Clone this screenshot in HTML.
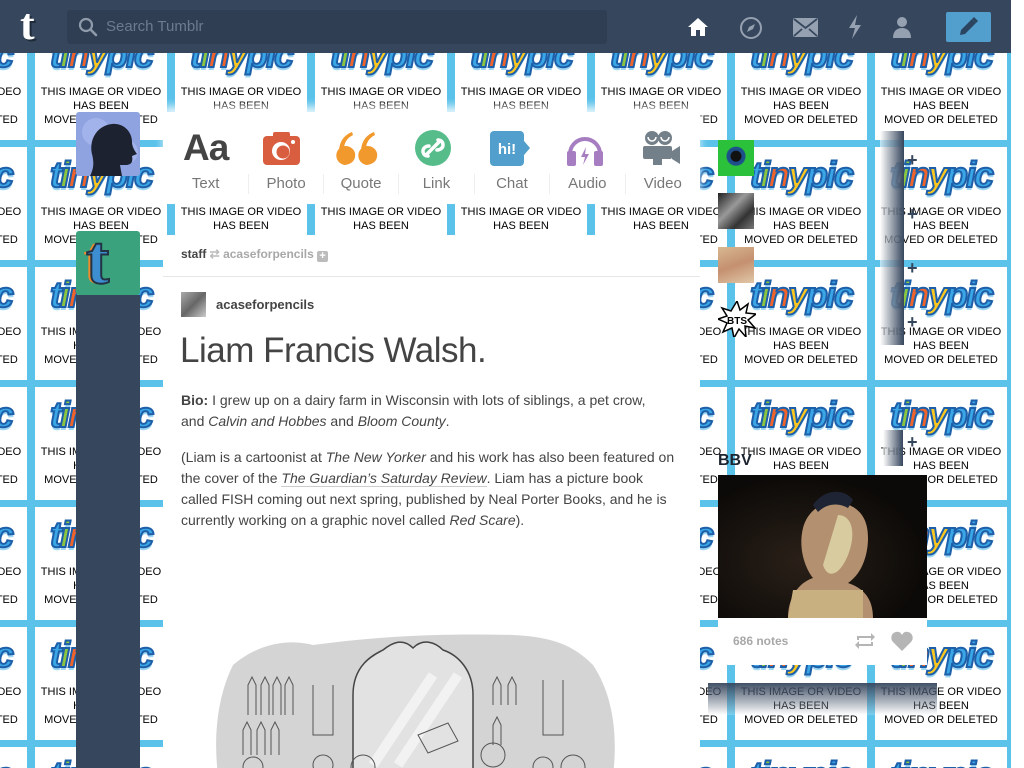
<!DOCTYPE html>
<html><head><meta charset="utf-8"><style>
*{margin:0;padding:0;box-sizing:border-box}
html,body{width:1024px;height:768px;overflow:hidden;background:#fff;font-family:"Liberation Sans",sans-serif;position:relative}
#bg{position:absolute;left:0;top:0;width:1011px;height:768px;overflow:hidden}
#grid{position:absolute;left:-113px;top:-100px;width:1260px;display:flex;flex-wrap:wrap}
.c{position:relative;width:140px;height:120px;border-left:8px solid #5bc2ea;border-top:7px solid #5bc2ea;background:#fff}
.c b{position:absolute;left:0;right:0;top:8px;text-align:center;font:italic 900 36px/40px "Liberation Sans",sans-serif;letter-spacing:-2px;-webkit-text-stroke:2px #1d5fa8;text-shadow:0 3px 0 #9fd6f2}
.c b span:nth-child(1){color:#3aa6e6}.c b span:nth-child(2){color:#8cc63e}.c b span:nth-child(3){color:#f0632a}.c b span:nth-child(4){color:#fcc721}.c b span:nth-child(n+5){color:#3aa6e6}
.c u{position:absolute;left:0;right:0;top:58px;text-align:center;text-decoration:none;font:11px/14px "Liberation Sans",sans-serif;color:#000}
#hdr{position:absolute;left:0;top:0;width:1011px;height:53px;background:#36465d}
.abs{position:absolute}
</style></head><body>
<div id="bg"><div id="grid">
<div class="c"><b><span>t</span><span>i</span><span>n</span><span>y</span><span>p</span><span>i</span><span>c</span></b><u>THIS IMAGE OR VIDEO<br>HAS BEEN<br>MOVED OR DELETED</u></div><div class="c"><b><span>t</span><span>i</span><span>n</span><span>y</span><span>p</span><span>i</span><span>c</span></b><u>THIS IMAGE OR VIDEO<br>HAS BEEN<br>MOVED OR DELETED</u></div><div class="c"><b><span>t</span><span>i</span><span>n</span><span>y</span><span>p</span><span>i</span><span>c</span></b><u>THIS IMAGE OR VIDEO<br>HAS BEEN<br>MOVED OR DELETED</u></div><div class="c"><b><span>t</span><span>i</span><span>n</span><span>y</span><span>p</span><span>i</span><span>c</span></b><u>THIS IMAGE OR VIDEO<br>HAS BEEN<br>MOVED OR DELETED</u></div><div class="c"><b><span>t</span><span>i</span><span>n</span><span>y</span><span>p</span><span>i</span><span>c</span></b><u>THIS IMAGE OR VIDEO<br>HAS BEEN<br>MOVED OR DELETED</u></div><div class="c"><b><span>t</span><span>i</span><span>n</span><span>y</span><span>p</span><span>i</span><span>c</span></b><u>THIS IMAGE OR VIDEO<br>HAS BEEN<br>MOVED OR DELETED</u></div><div class="c"><b><span>t</span><span>i</span><span>n</span><span>y</span><span>p</span><span>i</span><span>c</span></b><u>THIS IMAGE OR VIDEO<br>HAS BEEN<br>MOVED OR DELETED</u></div><div class="c"><b><span>t</span><span>i</span><span>n</span><span>y</span><span>p</span><span>i</span><span>c</span></b><u>THIS IMAGE OR VIDEO<br>HAS BEEN<br>MOVED OR DELETED</u></div><div class="c"><b><span>t</span><span>i</span><span>n</span><span>y</span><span>p</span><span>i</span><span>c</span></b><u>THIS IMAGE OR VIDEO<br>HAS BEEN<br>MOVED OR DELETED</u></div>
<div class="c"><b><span>t</span><span>i</span><span>n</span><span>y</span><span>p</span><span>i</span><span>c</span></b><u>THIS IMAGE OR VIDEO<br>HAS BEEN<br>MOVED OR DELETED</u></div><div class="c"><b><span>t</span><span>i</span><span>n</span><span>y</span><span>p</span><span>i</span><span>c</span></b><u>THIS IMAGE OR VIDEO<br>HAS BEEN<br>MOVED OR DELETED</u></div><div class="c"><b><span>t</span><span>i</span><span>n</span><span>y</span><span>p</span><span>i</span><span>c</span></b><u>THIS IMAGE OR VIDEO<br>HAS BEEN<br>MOVED OR DELETED</u></div><div class="c"><b><span>t</span><span>i</span><span>n</span><span>y</span><span>p</span><span>i</span><span>c</span></b><u>THIS IMAGE OR VIDEO<br>HAS BEEN<br>MOVED OR DELETED</u></div><div class="c"><b><span>t</span><span>i</span><span>n</span><span>y</span><span>p</span><span>i</span><span>c</span></b><u>THIS IMAGE OR VIDEO<br>HAS BEEN<br>MOVED OR DELETED</u></div><div class="c"><b><span>t</span><span>i</span><span>n</span><span>y</span><span>p</span><span>i</span><span>c</span></b><u>THIS IMAGE OR VIDEO<br>HAS BEEN<br>MOVED OR DELETED</u></div><div class="c"><b><span>t</span><span>i</span><span>n</span><span>y</span><span>p</span><span>i</span><span>c</span></b><u>THIS IMAGE OR VIDEO<br>HAS BEEN<br>MOVED OR DELETED</u></div><div class="c"><b><span>t</span><span>i</span><span>n</span><span>y</span><span>p</span><span>i</span><span>c</span></b><u>THIS IMAGE OR VIDEO<br>HAS BEEN<br>MOVED OR DELETED</u></div><div class="c"><b><span>t</span><span>i</span><span>n</span><span>y</span><span>p</span><span>i</span><span>c</span></b><u>THIS IMAGE OR VIDEO<br>HAS BEEN<br>MOVED OR DELETED</u></div>
<div class="c"><b><span>t</span><span>i</span><span>n</span><span>y</span><span>p</span><span>i</span><span>c</span></b><u>THIS IMAGE OR VIDEO<br>HAS BEEN<br>MOVED OR DELETED</u></div><div class="c"><b><span>t</span><span>i</span><span>n</span><span>y</span><span>p</span><span>i</span><span>c</span></b><u>THIS IMAGE OR VIDEO<br>HAS BEEN<br>MOVED OR DELETED</u></div><div class="c"><b><span>t</span><span>i</span><span>n</span><span>y</span><span>p</span><span>i</span><span>c</span></b><u>THIS IMAGE OR VIDEO<br>HAS BEEN<br>MOVED OR DELETED</u></div><div class="c"><b><span>t</span><span>i</span><span>n</span><span>y</span><span>p</span><span>i</span><span>c</span></b><u>THIS IMAGE OR VIDEO<br>HAS BEEN<br>MOVED OR DELETED</u></div><div class="c"><b><span>t</span><span>i</span><span>n</span><span>y</span><span>p</span><span>i</span><span>c</span></b><u>THIS IMAGE OR VIDEO<br>HAS BEEN<br>MOVED OR DELETED</u></div><div class="c"><b><span>t</span><span>i</span><span>n</span><span>y</span><span>p</span><span>i</span><span>c</span></b><u>THIS IMAGE OR VIDEO<br>HAS BEEN<br>MOVED OR DELETED</u></div><div class="c"><b><span>t</span><span>i</span><span>n</span><span>y</span><span>p</span><span>i</span><span>c</span></b><u>THIS IMAGE OR VIDEO<br>HAS BEEN<br>MOVED OR DELETED</u></div><div class="c"><b><span>t</span><span>i</span><span>n</span><span>y</span><span>p</span><span>i</span><span>c</span></b><u>THIS IMAGE OR VIDEO<br>HAS BEEN<br>MOVED OR DELETED</u></div><div class="c"><b><span>t</span><span>i</span><span>n</span><span>y</span><span>p</span><span>i</span><span>c</span></b><u>THIS IMAGE OR VIDEO<br>HAS BEEN<br>MOVED OR DELETED</u></div>
<div class="c"><b><span>t</span><span>i</span><span>n</span><span>y</span><span>p</span><span>i</span><span>c</span></b><u>THIS IMAGE OR VIDEO<br>HAS BEEN<br>MOVED OR DELETED</u></div><div class="c"><b><span>t</span><span>i</span><span>n</span><span>y</span><span>p</span><span>i</span><span>c</span></b><u>THIS IMAGE OR VIDEO<br>HAS BEEN<br>MOVED OR DELETED</u></div><div class="c"><b><span>t</span><span>i</span><span>n</span><span>y</span><span>p</span><span>i</span><span>c</span></b><u>THIS IMAGE OR VIDEO<br>HAS BEEN<br>MOVED OR DELETED</u></div><div class="c"><b><span>t</span><span>i</span><span>n</span><span>y</span><span>p</span><span>i</span><span>c</span></b><u>THIS IMAGE OR VIDEO<br>HAS BEEN<br>MOVED OR DELETED</u></div><div class="c"><b><span>t</span><span>i</span><span>n</span><span>y</span><span>p</span><span>i</span><span>c</span></b><u>THIS IMAGE OR VIDEO<br>HAS BEEN<br>MOVED OR DELETED</u></div><div class="c"><b><span>t</span><span>i</span><span>n</span><span>y</span><span>p</span><span>i</span><span>c</span></b><u>THIS IMAGE OR VIDEO<br>HAS BEEN<br>MOVED OR DELETED</u></div><div class="c"><b><span>t</span><span>i</span><span>n</span><span>y</span><span>p</span><span>i</span><span>c</span></b><u>THIS IMAGE OR VIDEO<br>HAS BEEN<br>MOVED OR DELETED</u></div><div class="c"><b><span>t</span><span>i</span><span>n</span><span>y</span><span>p</span><span>i</span><span>c</span></b><u>THIS IMAGE OR VIDEO<br>HAS BEEN<br>MOVED OR DELETED</u></div><div class="c"><b><span>t</span><span>i</span><span>n</span><span>y</span><span>p</span><span>i</span><span>c</span></b><u>THIS IMAGE OR VIDEO<br>HAS BEEN<br>MOVED OR DELETED</u></div>
<div class="c"><b><span>t</span><span>i</span><span>n</span><span>y</span><span>p</span><span>i</span><span>c</span></b><u>THIS IMAGE OR VIDEO<br>HAS BEEN<br>MOVED OR DELETED</u></div><div class="c"><b><span>t</span><span>i</span><span>n</span><span>y</span><span>p</span><span>i</span><span>c</span></b><u>THIS IMAGE OR VIDEO<br>HAS BEEN<br>MOVED OR DELETED</u></div><div class="c"><b><span>t</span><span>i</span><span>n</span><span>y</span><span>p</span><span>i</span><span>c</span></b><u>THIS IMAGE OR VIDEO<br>HAS BEEN<br>MOVED OR DELETED</u></div><div class="c"><b><span>t</span><span>i</span><span>n</span><span>y</span><span>p</span><span>i</span><span>c</span></b><u>THIS IMAGE OR VIDEO<br>HAS BEEN<br>MOVED OR DELETED</u></div><div class="c"><b><span>t</span><span>i</span><span>n</span><span>y</span><span>p</span><span>i</span><span>c</span></b><u>THIS IMAGE OR VIDEO<br>HAS BEEN<br>MOVED OR DELETED</u></div><div class="c"><b><span>t</span><span>i</span><span>n</span><span>y</span><span>p</span><span>i</span><span>c</span></b><u>THIS IMAGE OR VIDEO<br>HAS BEEN<br>MOVED OR DELETED</u></div><div class="c"><b><span>t</span><span>i</span><span>n</span><span>y</span><span>p</span><span>i</span><span>c</span></b><u>THIS IMAGE OR VIDEO<br>HAS BEEN<br>MOVED OR DELETED</u></div><div class="c"><b><span>t</span><span>i</span><span>n</span><span>y</span><span>p</span><span>i</span><span>c</span></b><u>THIS IMAGE OR VIDEO<br>HAS BEEN<br>MOVED OR DELETED</u></div><div class="c"><b><span>t</span><span>i</span><span>n</span><span>y</span><span>p</span><span>i</span><span>c</span></b><u>THIS IMAGE OR VIDEO<br>HAS BEEN<br>MOVED OR DELETED</u></div>
<div class="c"><b><span>t</span><span>i</span><span>n</span><span>y</span><span>p</span><span>i</span><span>c</span></b><u>THIS IMAGE OR VIDEO<br>HAS BEEN<br>MOVED OR DELETED</u></div><div class="c"><b><span>t</span><span>i</span><span>n</span><span>y</span><span>p</span><span>i</span><span>c</span></b><u>THIS IMAGE OR VIDEO<br>HAS BEEN<br>MOVED OR DELETED</u></div><div class="c"><b><span>t</span><span>i</span><span>n</span><span>y</span><span>p</span><span>i</span><span>c</span></b><u>THIS IMAGE OR VIDEO<br>HAS BEEN<br>MOVED OR DELETED</u></div><div class="c"><b><span>t</span><span>i</span><span>n</span><span>y</span><span>p</span><span>i</span><span>c</span></b><u>THIS IMAGE OR VIDEO<br>HAS BEEN<br>MOVED OR DELETED</u></div><div class="c"><b><span>t</span><span>i</span><span>n</span><span>y</span><span>p</span><span>i</span><span>c</span></b><u>THIS IMAGE OR VIDEO<br>HAS BEEN<br>MOVED OR DELETED</u></div><div class="c"><b><span>t</span><span>i</span><span>n</span><span>y</span><span>p</span><span>i</span><span>c</span></b><u>THIS IMAGE OR VIDEO<br>HAS BEEN<br>MOVED OR DELETED</u></div><div class="c"><b><span>t</span><span>i</span><span>n</span><span>y</span><span>p</span><span>i</span><span>c</span></b><u>THIS IMAGE OR VIDEO<br>HAS BEEN<br>MOVED OR DELETED</u></div><div class="c"><b><span>t</span><span>i</span><span>n</span><span>y</span><span>p</span><span>i</span><span>c</span></b><u>THIS IMAGE OR VIDEO<br>HAS BEEN<br>MOVED OR DELETED</u></div><div class="c"><b><span>t</span><span>i</span><span>n</span><span>y</span><span>p</span><span>i</span><span>c</span></b><u>THIS IMAGE OR VIDEO<br>HAS BEEN<br>MOVED OR DELETED</u></div>
<div class="c"><b><span>t</span><span>i</span><span>n</span><span>y</span><span>p</span><span>i</span><span>c</span></b><u>THIS IMAGE OR VIDEO<br>HAS BEEN<br>MOVED OR DELETED</u></div><div class="c"><b><span>t</span><span>i</span><span>n</span><span>y</span><span>p</span><span>i</span><span>c</span></b><u>THIS IMAGE OR VIDEO<br>HAS BEEN<br>MOVED OR DELETED</u></div><div class="c"><b><span>t</span><span>i</span><span>n</span><span>y</span><span>p</span><span>i</span><span>c</span></b><u>THIS IMAGE OR VIDEO<br>HAS BEEN<br>MOVED OR DELETED</u></div><div class="c"><b><span>t</span><span>i</span><span>n</span><span>y</span><span>p</span><span>i</span><span>c</span></b><u>THIS IMAGE OR VIDEO<br>HAS BEEN<br>MOVED OR DELETED</u></div><div class="c"><b><span>t</span><span>i</span><span>n</span><span>y</span><span>p</span><span>i</span><span>c</span></b><u>THIS IMAGE OR VIDEO<br>HAS BEEN<br>MOVED OR DELETED</u></div><div class="c"><b><span>t</span><span>i</span><span>n</span><span>y</span><span>p</span><span>i</span><span>c</span></b><u>THIS IMAGE OR VIDEO<br>HAS BEEN<br>MOVED OR DELETED</u></div><div class="c"><b><span>t</span><span>i</span><span>n</span><span>y</span><span>p</span><span>i</span><span>c</span></b><u>THIS IMAGE OR VIDEO<br>HAS BEEN<br>MOVED OR DELETED</u></div><div class="c"><b><span>t</span><span>i</span><span>n</span><span>y</span><span>p</span><span>i</span><span>c</span></b><u>THIS IMAGE OR VIDEO<br>HAS BEEN<br>MOVED OR DELETED</u></div><div class="c"><b><span>t</span><span>i</span><span>n</span><span>y</span><span>p</span><span>i</span><span>c</span></b><u>THIS IMAGE OR VIDEO<br>HAS BEEN<br>MOVED OR DELETED</u></div>
<div class="c"><b><span>t</span><span>i</span><span>n</span><span>y</span><span>p</span><span>i</span><span>c</span></b><u>THIS IMAGE OR VIDEO<br>HAS BEEN<br>MOVED OR DELETED</u></div><div class="c"><b><span>t</span><span>i</span><span>n</span><span>y</span><span>p</span><span>i</span><span>c</span></b><u>THIS IMAGE OR VIDEO<br>HAS BEEN<br>MOVED OR DELETED</u></div><div class="c"><b><span>t</span><span>i</span><span>n</span><span>y</span><span>p</span><span>i</span><span>c</span></b><u>THIS IMAGE OR VIDEO<br>HAS BEEN<br>MOVED OR DELETED</u></div><div class="c"><b><span>t</span><span>i</span><span>n</span><span>y</span><span>p</span><span>i</span><span>c</span></b><u>THIS IMAGE OR VIDEO<br>HAS BEEN<br>MOVED OR DELETED</u></div><div class="c"><b><span>t</span><span>i</span><span>n</span><span>y</span><span>p</span><span>i</span><span>c</span></b><u>THIS IMAGE OR VIDEO<br>HAS BEEN<br>MOVED OR DELETED</u></div><div class="c"><b><span>t</span><span>i</span><span>n</span><span>y</span><span>p</span><span>i</span><span>c</span></b><u>THIS IMAGE OR VIDEO<br>HAS BEEN<br>MOVED OR DELETED</u></div><div class="c"><b><span>t</span><span>i</span><span>n</span><span>y</span><span>p</span><span>i</span><span>c</span></b><u>THIS IMAGE OR VIDEO<br>HAS BEEN<br>MOVED OR DELETED</u></div><div class="c"><b><span>t</span><span>i</span><span>n</span><span>y</span><span>p</span><span>i</span><span>c</span></b><u>THIS IMAGE OR VIDEO<br>HAS BEEN<br>MOVED OR DELETED</u></div><div class="c"><b><span>t</span><span>i</span><span>n</span><span>y</span><span>p</span><span>i</span><span>c</span></b><u>THIS IMAGE OR VIDEO<br>HAS BEEN<br>MOVED OR DELETED</u></div>
</div></div>

<div id="hdr">
  <div class="abs" style="left:20px;top:2px;font:bold 44px/46px 'Liberation Serif',serif;color:#fff;text-shadow:2px 2px 0 #1f2b3b">t</div>
  <div class="abs" style="left:67px;top:10px;width:540px;height:34px;background:#2f3e53;border-radius:3px"></div>
  <svg class="abs" style="left:78px;top:17px" width="20" height="20" viewBox="0 0 20 20"><circle cx="8" cy="8" r="6" fill="none" stroke="#8f9bab" stroke-width="2.2"/><path d="M12.5 12.5L18 18" stroke="#8f9bab" stroke-width="2.6" stroke-linecap="round"/></svg>
  <div class="abs" style="left:106px;top:18px;font:15px 'Liberation Sans',sans-serif;color:#6d7b8e">Search Tumblr</div>
  <svg class="abs" style="left:687px;top:16px" width="22" height="22" viewBox="0 0 22 22"><path d="M11 2L1 11h3v9h5v-6h4v6h5v-9h3z" fill="#fff"/></svg>
  <svg class="abs" style="left:739px;top:16px" width="24" height="24" viewBox="0 0 24 24"><circle cx="12" cy="12" r="10" fill="none" stroke="#95a1b0" stroke-width="2"/><path d="M16 8l-6 3-2 5 6-3z" fill="#95a1b0"/></svg>
  <svg class="abs" style="left:793px;top:18px" width="25" height="19" viewBox="0 0 25 19"><rect x="0" y="0" width="25" height="19" rx="2" fill="#95a1b0"/><path d="M1 1l11.5 9L24 1M1 18l8-7M24 18l-8-7" stroke="#36465d" stroke-width="1.8" fill="none"/></svg>
  <svg class="abs" style="left:847px;top:15px" width="16" height="24" viewBox="0 0 16 24"><path d="M10 0L2 13h6l-3 11 9-14H8z" fill="#95a1b0"/></svg>
  <svg class="abs" style="left:892px;top:16px" width="20" height="22" viewBox="0 0 20 22"><circle cx="10" cy="6" r="5" fill="#95a1b0"/><path d="M1 22c0-7 4-10 9-10s9 3 9 10z" fill="#95a1b0"/></svg>
  <div class="abs" style="left:946px;top:12px;width:45px;height:30px;background:#529ecc;border-radius:2px"></div>
  <svg class="abs" style="left:957px;top:16px" width="22" height="22" viewBox="0 0 22 22"><path d="M3 19l1-5L15 3l4 4L8 18z" fill="#2b4560"/><path d="M15 3l2-2 4 4-2 2z" fill="#2b4560"/></svg>
</div>

<div class="abs" style="left:76px;top:295px;width:64px;height:473px;background:#36465d"></div>
<div class="abs" style="left:76px;top:112px;width:64px;height:64px;background:#8fa3e0;border-radius:3px;overflow:hidden">
  <svg width="64" height="64" viewBox="0 0 64 64"><circle cx="20" cy="20" r="14" fill="#a9b8ee" opacity=".7"/><circle cx="50" cy="40" r="12" fill="#a9b8ee" opacity=".7"/><path d="M14 64c4-8 4-14 2-22-3-12 3-28 20-30 12-1 20 8 20 18 0 4 2 8 5 12l-5 2c1 5 0 9-6 9h-6l2 11z" fill="#1c2230"/></svg>
</div>
<div class="abs" style="left:76px;top:231px;width:64px;height:64px;background:#3aa27c;border-radius:3px;overflow:hidden">
  <div class="abs" style="left:10px;top:-10px;font:bold 70px/80px 'Liberation Serif',serif;color:#3d8ed0;-webkit-text-stroke:2px #234;text-shadow:-3px 0 #f08a2c">t</div>
</div>

<div class="abs" style="left:163px;top:112px;width:537px;height:92px;background:#fff;box-shadow:0 -6px 8px rgba(255,255,255,.8)"></div>
<div class="abs" style="left:183px;top:128px;font:bold 37px/40px 'Liberation Sans',sans-serif;color:#444;letter-spacing:-1px">Aa</div>
<svg class="abs" style="left:263px;top:132px" width="37" height="33" viewBox="0 0 37 33"><rect x="0" y="4" width="37" height="29" rx="4" fill="#d95e40"/><rect x="10" y="0" width="17" height="8" rx="2" fill="#d95e40"/><circle cx="18" cy="19" r="9" fill="#fff"/><circle cx="20" cy="20" r="6.5" fill="#d95e40"/><circle cx="30" cy="10" r="2" fill="#fff"/></svg>
<svg class="abs" style="left:336px;top:132px" width="42" height="33" viewBox="0 0 42 33"><path d="M10 33a9.5 9.5 0 1 1 9-12c1 6-2 11-10 12zM3 20c0-10 5-17 13-20l1 3c-6 3-9 8-9 14z" fill="#f2992e"/><path d="M32 33a9.5 9.5 0 1 1 9-12c1 6-2 11-10 12zM25 20c0-10 5-17 13-20l1 3c-6 3-9 8-9 14z" fill="#f2992e"/></svg>
<svg class="abs" style="left:415px;top:130px" width="36" height="36" viewBox="0 0 36 36"><circle cx="18" cy="18" r="18" fill="#56bc8a"/><path d="M13 26c-3 0-5-2-5-5s3-5 6-5M23 10c3 0 5 2 5 5s-3 5-6 5M12 24l12-12" stroke="#fff" stroke-width="3.5" fill="none" stroke-linecap="round"/></svg>
<svg class="abs" style="left:490px;top:131px" width="40" height="35" viewBox="0 0 40 35"><rect x="0" y="0" width="34" height="35" rx="4" fill="#529ecc"/><path d="M34 10l6 7-6 7z" fill="#529ecc"/><text x="17" y="23" text-anchor="middle" font-family="Liberation Sans" font-weight="bold" font-size="15" fill="#fff">hi!</text></svg>
<svg class="abs" style="left:566px;top:134px" width="38" height="32" viewBox="0 0 38 32"><path d="M4 20a15 15 0 0 1 30 0" stroke="#a77dc2" stroke-width="4" fill="none"/><rect x="1" y="17" width="9" height="15" rx="2" fill="#a77dc2"/><rect x="28" y="17" width="9" height="15" rx="2" fill="#a77dc2"/><path d="M20 13l-5 10h4l-2 8 6-11h-4z" fill="#a77dc2"/></svg>
<svg class="abs" style="left:643px;top:131px" width="37" height="34" viewBox="0 0 37 34"><circle cx="9" cy="7" r="7" fill="#748089"/><circle cx="22" cy="7" r="7" fill="#748089"/><path d="M5 6a4 4 0 0 0 8 0M18 6a4 4 0 0 0 8 0" stroke="#fff" stroke-width="1.5" fill="none"/><rect x="0" y="15" width="29" height="13" rx="2" fill="#748089"/><path d="M29 20l8-5v18l-8-5z" fill="#748089"/><rect x="10" y="27" width="9" height="7" fill="#748089"/></svg>
<div class="abs" style="left:163px;top:174px;width:537px;display:flex;font:15px/20px 'Liberation Sans',sans-serif;color:#777">
  <div style="width:86px;text-align:center">Text</div><div style="width:75px;text-align:center;border-left:1px solid #eee">Photo</div><div style="width:76px;text-align:center;border-left:1px solid #eee">Quote</div><div style="width:76px;text-align:center;border-left:1px solid #eee">Link</div><div style="width:76px;text-align:center;border-left:1px solid #eee">Chat</div><div style="width:76px;text-align:center;border-left:1px solid #eee">Audio</div><div style="width:76px;text-align:center;border-left:1px solid #eee">Video</div>
</div>

<div class="abs" style="left:163px;top:235px;width:537px;height:533px;background:#fff;overflow:hidden">
  <div class="abs" style="left:18px;top:11px;font:bold 12px/16px 'Liberation Sans',sans-serif;color:#444">staff <span style="color:#bbb">⇄</span> <span style="color:#a8a8a8">acaseforpencils</span> <span style="display:inline-block;width:11px;height:11px;background:#bbb;border-radius:2px;vertical-align:-1px;color:#fff;font-size:11px;line-height:11px;text-align:center">+</span></div>
  <div class="abs" style="left:0;top:41px;width:537px;height:1px;background:#e6e6e6"></div>
  <div class="abs" style="left:18px;top:57px;width:25px;height:25px;background:linear-gradient(135deg,#aaa,#666 50%,#ccc)"></div>
  <div class="abs" style="left:53px;top:62px;font:bold 13px/16px 'Liberation Sans',sans-serif;color:#444">acaseforpencils</div>
  <div class="abs" style="left:17px;top:94px;font:35px/44px 'Liberation Sans',sans-serif;color:#444;letter-spacing:-0.5px">Liam Francis Walsh.</div>
  <div class="abs" style="left:18px;top:155px;font:14px/21px 'Liberation Sans',sans-serif;color:#444">
    <p style="width:482px"><b>Bio:</b> I grew up on a dairy farm in Wisconsin with lots of siblings, a pet crow, and <i>Calvin and Hobbes</i> and <i>Bloom County</i>.</p>
    <p style="margin-top:15px;width:497px">(Liam is a cartoonist at <i>The New Yorker</i> and his work has also been featured on the cover of the <i style="border-bottom:1px solid #ccc">The Guardian’s Saturday Review</i>. Liam has a picture book called FISH coming out next spring, published by Neal Porter Books, and he is currently working on a graphic novel called <i>Red Scare</i>).</p>
  </div>
  <svg class="abs" style="left:50px;top:390px" width="420" height="143" viewBox="0 0 420 143">
    <path d="M20 40c30-25 60-25 80-20 60-8 120-12 200-10 40 2 60 10 80 30 20 30 25 70 20 110H5C0 110 5 70 20 40z" fill="#d4d4d4"/>
    <path d="M140 143V70c0-30 20-40 30-45 10-8 20-12 30-2 10-10 22-6 30 2 15 5 30 20 30 45v73" stroke="#444" stroke-width="1.5" fill="#e2e2e2"/>
    <path d="M160 140l60-90M185 140l60-90" stroke="#f2f2f2" stroke-width="10"/>
    <g stroke="#555" fill="none" stroke-width="1"><path d="M35 90v-30l4-8 4 8v30M48 90v-30l4-8 4 8v30M60 90v-30l4-8 4 8v30M72 90v-30l4-8 4 8v30M30 130v-25l4-8 4 8v25M44 130v-25l4-8 4 8v25M58 130v-25l4-8 4 8v25M280 80v-20l4-8 4 8v20M295 80v-20l4-8 4 8v20M280 120v-20l4-8 4 8v20M100 60v50h20V60M330 55v55h20V55"/><circle cx="40" cy="142" r="10"/><circle cx="110" cy="140" r="10"/><circle cx="150" cy="142" r="12"/><circle cx="280" cy="130" r="12"/><circle cx="330" cy="142" r="10"/><circle cx="360" cy="142" r="12"/><path d="M205 110l30-12 10 18-30 12z"/></g>
  </svg>
</div>

<div class="abs" style="left:718px;top:140px;width:36px;height:36px;background:radial-gradient(circle at 50% 45%,#111 0 5px,#1d4f8a 6px 9px,#2bc13a 10px)"></div>
<div class="abs" style="left:718px;top:193px;width:36px;height:36px;background:linear-gradient(135deg,#222,#999 40%,#333 70%,#777)"></div>
<div class="abs" style="left:718px;top:247px;width:36px;height:36px;background:linear-gradient(160deg,#d8b890,#c49070 50%,#e0c8a8)"></div>
<svg class="abs" style="left:718px;top:301px" width="38" height="36" viewBox="0 0 38 36"><path d="M19 0l3 9 8-6-2 9 10 1-8 6 7 8-10-2 1 11-7-8-5 9-2-10-9 4 4-9-9-4 9-3-5-8 9 3z" fill="#fff" stroke="#000" stroke-width="1.5"/><text x="19" y="23" text-anchor="middle" font-family="Liberation Sans" font-weight="bold" font-size="10" fill="#000">BTS</text></svg>
<div class="abs" style="left:880px;top:131px;width:24px;height:214px;background:linear-gradient(90deg,rgba(255,255,255,.6),#36465d)"></div>
<div class="abs" style="left:883px;top:430px;width:20px;height:36px;background:linear-gradient(90deg,rgba(255,255,255,.6),#36465d)"></div>
<div class="abs" style="left:907px;top:133px;font:bold 18px 'Liberation Sans',sans-serif;color:#36465d;line-height:54px">+<br>+<br>+<br>+</div>
<div class="abs" style="left:907px;top:433px;font:bold 18px/18px 'Liberation Sans',sans-serif;color:#36465d">+</div>

<div class="abs" style="left:718px;top:452px;font:bold 16px/18px 'Liberation Sans',sans-serif;color:#1c2430">BBV</div>
<div class="abs" style="left:718px;top:475px;width:209px;height:143px;background:radial-gradient(ellipse at 40% 60%,#2a2018,#0c0a08 70%)">
  <svg width="209" height="143" viewBox="0 0 209 143"><path d="M70 143c0-20 10-35 25-40-8-10-15-30-10-50 5-20 25-30 40-25 20 5 25 20 25 35s-5 35-20 45c15 5 25 15 25 35z" fill="#b39070"/><path d="M95 30c10-15 30-18 40-5l-5 8c-10-6-22-4-30 4z" fill="#1e2433"/><path d="M120 40c15 0 18 20 10 40s-20 25-25 10" fill="#d8cba0"/><path d="M75 115h70v28H70z" fill="#c8b080"/></svg>
</div>
<div class="abs" style="left:718px;top:618px;width:209px;height:47px;background:#fff">
  <div class="abs" style="left:15px;top:15px;font:bold 12px/16px 'Liberation Sans',sans-serif;color:#a8a8a8">686 notes</div>
  <svg class="abs" style="left:136px;top:13px" width="22" height="20" viewBox="0 0 22 20"><path d="M3 9V5h14V2l4 4-4 4V7H5v2zM19 11v4H5v3l-4-4 4-4v3h12v-2z" fill="#b5b5b5"/></svg>
  <svg class="abs" style="left:173px;top:13px" width="22" height="20" viewBox="0 0 22 20"><path d="M11 20L2 11C-1 8 0 2 5 1c3-1 5 1 6 3 1-2 3-4 6-3 5 1 6 7 3 10z" fill="#b5b5b5"/></svg>
</div>
<div class="abs" style="left:708px;top:683px;width:229px;height:32px;background:linear-gradient(180deg,rgba(54,70,93,.95),rgba(255,255,255,.2))"></div>
</body></html>
